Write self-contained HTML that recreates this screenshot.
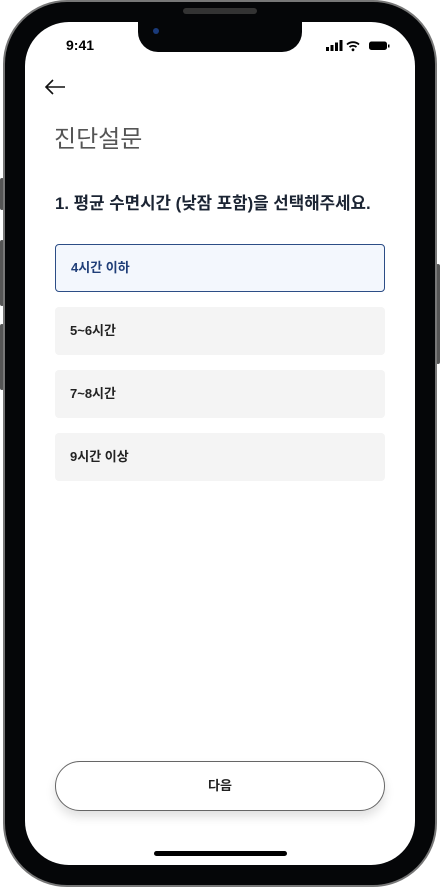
<!DOCTYPE html>
<html><head><meta charset="utf-8"><style>
*{margin:0;padding:0;box-sizing:border-box}
body{width:440px;height:888px;background:#fff;position:relative;overflow:hidden;font-family:"Liberation Sans","Noto Sans CJK KR",sans-serif}
.frame{position:absolute;left:3px;top:0;width:434px;height:887px;border-radius:64px;background:#050608;border:2px solid #777}
.btn{position:absolute;background:#555;width:4px;border-radius:2px}
.screen{position:absolute;left:25px;top:22px;width:390px;height:843px;border-radius:44px;background:#fff;overflow:hidden}
.notch{position:absolute;left:113px;top:0;width:164px;height:30px;background:#050608;border-radius:0 0 20px 20px}
.opt{position:absolute;left:30px;width:330px;height:48px;border-radius:4px;background:#f4f4f4;font-size:13px;font-weight:bold;color:#222;padding-left:15px;line-height:48px}
</style></head><body>
<div class="btn" style="left:0;top:178px;height:32px"></div>
<div class="btn" style="left:0;top:240px;height:66px"></div>
<div class="btn" style="left:0;top:324px;height:66px"></div>
<div class="btn" style="left:436px;top:264px;height:100px"></div>
<div class="frame"></div>
<div style="position:absolute;left:183px;top:8px;width:74px;height:6px;border-radius:3px;background:#333"></div>
<div class="screen">
<div class="notch"><div style="position:absolute;left:15px;top:6px;width:6px;height:6px;border-radius:3px;background:#1a3a7a"></div></div>
<div style="position:absolute;left:41px;top:15px;font-size:14px;font-weight:bold;color:#000">9:41</div>
<svg style="position:absolute;left:301px;top:18px" width="64" height="12" viewBox="0 0 64 12">
<rect x="0" y="7" width="3" height="4" fill="#000"/><rect x="4.5" y="5" width="3" height="6" fill="#000"/><rect x="9" y="2.5" width="3" height="8.5" fill="#000"/><rect x="13.5" y="0" width="3" height="11" fill="#000"/>
<path d="M21 4.5a9 9 0 0 1 12 0M23.5 7a5.5 5.5 0 0 1 7 0" stroke="#000" stroke-width="1.8" fill="none"/><circle cx="27" cy="9.8" r="1.4" fill="#000"/>
<rect x="43" y="1.5" width="18" height="8.5" rx="2.5" fill="#000"/><rect x="62" y="4.5" width="1.5" height="3" fill="#000"/>
</svg>
<svg style="position:absolute;left:19px;top:56px" width="22" height="18" viewBox="0 0 22 18"><path d="M21 9H2M9 2L2 9l7 7" stroke="#111" stroke-width="1.6" fill="none"/></svg>
<div style="position:absolute;left:29px;top:97px;font-size:24px;color:#555">진단설문</div>
<div style="position:absolute;left:30px;top:168px;font-size:16.8px;font-weight:bold;color:#1b2433">1. 평균 수면시간 (낮잠 포함)을 선택해주세요.</div>
<div class="opt" style="top:222px;background:#f3f7fd;border:1px solid #2c4d86;color:#1f3e78;line-height:46px">4시간 이하</div>
<div class="opt" style="top:285px">5~6시간</div>
<div class="opt" style="top:348px">7~8시간</div>
<div class="opt" style="top:411px">9시간 이상</div>
<div style="position:absolute;left:30px;top:739px;width:330px;height:50px;border:1px solid #666;border-radius:25px;background:#fff;box-shadow:0 6px 10px rgba(0,0,0,0.12);text-align:center;line-height:48px;font-size:13px;font-weight:bold;color:#222">다음</div>
<div style="position:absolute;left:129px;top:829px;width:133px;height:5px;border-radius:3px;background:#000"></div>
</div>
</body></html>
